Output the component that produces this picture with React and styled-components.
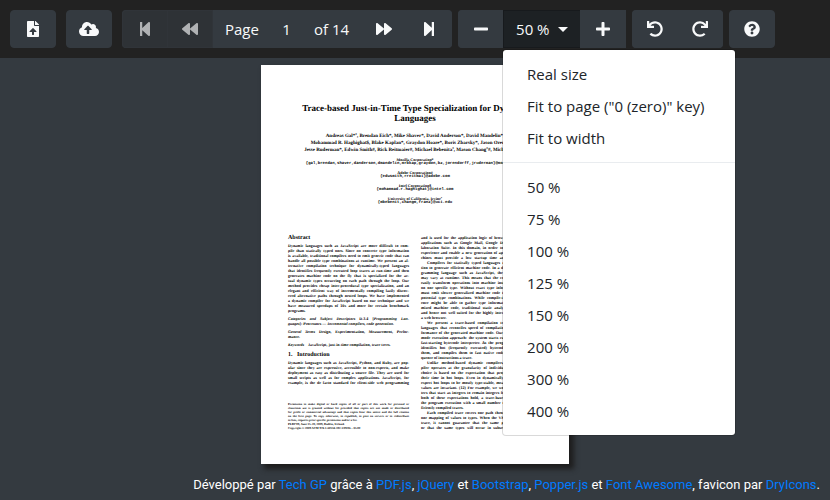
import React from "react";
import styled, { createGlobalStyle, css } from "styled-components";
import {
  FaFileUpload,
  FaCloudUploadAlt,
  FaStepBackward,
  FaBackward,
  FaForward,
  FaStepForward,
  FaMinus,
  FaPlus,
  FaUndo,
  FaRedo,
  FaQuestionCircle,
} from "react-icons/fa";

const GlobalStyle = createGlobalStyle`
  *, *::before, *::after { box-sizing: border-box; }
  body {
    margin: 0;
    background: #343a40;
    color: #fff;
    font-family: "Open Sans", "Noto Sans", sans-serif;
    font-size: 15px;
    line-height: 24px;
  }
`;

const Toolbar = styled.header`
  display: flex;
  align-items: center;
  gap: 6px;
  padding: 10px;
  background: #222;
`;

const FileActions = styled.div`
  display: flex;
  gap: 10px;
  margin-right: 4px;
`;

const ButtonGroup = styled.div`
  position: relative;
  display: flex;
  border-radius: 4px;
  background: #343a40;

  > * + * {
    margin-left: -1px;
  }
`;

const controlBox = css`
  height: 38px;
  padding: 6px 12px;
  border: 1px solid transparent;
  color: #f8f9fa;
  font: inherit;
`;

const ToolButton = styled.button`
  ${controlBox}
  display: inline-flex;
  align-items: center;
  justify-content: center;
  gap: 8px;
  min-width: 46px;
  border-radius: 4px;
  background: ${(p) => (p.$open ? "#1d2124" : "#343a40")};
  border-color: ${(p) => (p.$open ? "#171a1d" : "#343a40")};
  white-space: nowrap;

  &:disabled {
    background: #2e3236;
    border-color: #303439;
    color: #b0b2b4;
  }

  ${ButtonGroup} > &:not(:first-child) {
    border-top-left-radius: 0;
    border-bottom-left-radius: 0;
  }
  ${ButtonGroup} > &:not(:last-child) {
    border-top-right-radius: 0;
    border-bottom-right-radius: 0;
  }

  svg {
    width: 20px;
    height: 16px;
  }
`;

const GroupLabel = styled.label`
  ${controlBox}
`;

const GroupText = styled.span`
  ${controlBox}
`;

const PageInput = styled.input`
  ${controlBox}
  width: 31px;
  padding: 6px 0;
  background: transparent;
  text-align: center;
`;

const Caret = styled.span`
  border-top: 5px solid currentColor;
  border-left: 5px solid transparent;
  border-right: 5px solid transparent;
`;

const Menu = styled.div`
  position: absolute;
  top: 100%;
  left: 45px;
  z-index: 10;
  min-width: 234px;
  margin-top: 1px;
  padding: 8px 0;
  border: 1px solid rgba(0, 0, 0, 0.15);
  border-radius: 4px;
  background: #fff;
  background-clip: padding-box;
`;

const MenuItem = styled.button`
  display: block;
  width: 100%;
  padding: 4px 24px;
  border: 0;
  background: transparent;
  color: #212529;
  font: inherit;
  text-align: left;
  white-space: nowrap;
`;

const MenuDivider = styled.hr`
  height: 1px;
  margin: 8px 0;
  border: 0;
  background: #e9ecef;
`;

const Viewer = styled.main`
  display: flex;
  justify-content: center;
  padding: 7px 10px 9px;
`;

const Sheet = styled.article`
  flex: none;
  width: 308px;
  padding: 38px 27px 34px;
  background: #fff;
  color: #000;
  box-shadow: 4px 4px 5px 1px #1e1e1e;
  font-family: "Liberation Serif", serif;
  font-size: 4px;
  font-weight: 700;
  line-height: 5px;
  text-rendering: geometricPrecision;
`;

const PaperTitle = styled.h1`
  margin: 0 0 10px;
  font-size: 9px;
  line-height: 10px;
  text-align: center;
  white-space: nowrap;
`;

const Authors = styled.p`
  display: flex;
  flex-direction: column;
  align-items: center;
  margin: 0 0 3px;
  font-size: 5px;
  line-height: 7px;
  white-space: nowrap;
`;

const Affiliation = styled.p`
  display: flex;
  flex-direction: column;
  align-items: center;
  margin: 0 0 3px;
  font-size: 4px;
  line-height: 5px;
  white-space: nowrap;
`;

const Email = styled.span`
  font-family: "Liberation Mono", monospace;
`;

const Columns = styled.div`
  display: grid;
  grid-template-columns: 1fr 1fr;
  gap: 12px;
  margin-top: 29px;
`;

const Column = styled.section`
  min-width: 0;
`;

const Heading = styled.h2`
  margin: ${(p) => (p.$spaced ? "5px 0 2px" : "0 0 2px")};
  font-size: 6px;
  line-height: 6px;
  white-space: pre;
`;

const Paragraph = styled.p`
  margin: 0 0 ${(p) => (p.$gap ? "3px" : "0")};
`;

const Line = styled.span`
  display: block;
  padding-left: ${(p) => (p.$indent ? "6px" : "0")};
  text-align: left;
  text-align-last: ${(p) => (p.$end ? "left" : "justify")};
  white-space: nowrap;
`;

const Notice = styled.p`
  margin: 17px 0 0;
  font-size: 3px;
  line-height: 4px;
`;

const Credits = styled.footer`
  padding: 0 10px 2px;
  font-family: Roboto, "Open Sans", sans-serif;
  font-size: 13px;
  text-align: right;
`;

const CreditLink = styled.a`
  color: #007bff;
  text-decoration: none;
`;

const fits = ["Real size", 'Fit to page ("0 (zero)" key)', "Fit to width"];
const zooms = [50, 75, 100, 125, 150, 200, 300, 400];

const abstract = [
  "Dynamic languages such as JavaScript are more difficult to com-",
  "pile than statically typed ones. Since no concrete type information",
  "is available, traditional compilers need to emit generic code that can",
  "handle all possible type combinations at runtime. We present an al-",
  "ternative compilation technique for dynamically-typed languages",
  "that identifies frequently executed loop traces at run-time and then",
  "generates machine code on the fly that is specialized for the ac-",
  "tual dynamic types occurring on each path through the loop. Our",
  "method provides cheap inter-procedural type specialization, and an",
  "elegant and efficient way of incrementally compiling lazily discov-",
  "ered alternative paths through nested loops. We have implemented",
  "a dynamic compiler for JavaScript based on our technique and we",
  "have measured speedups of 10x and more for certain benchmark",
  "programs.",
];

const introduction = [
  "Dynamic languages such as JavaScript, Python, and Ruby, are pop-",
  "ular since they are expressive, accessible to non-experts, and make",
  "deployment as easy as distributing a source file. They are used for",
  "small scripts as well as for complex applications. JavaScript, for",
  "example, is the de facto standard for client-side web programming",
];

const notice = [
  "Permission to make digital or hard copies of all or part of this work for personal or",
  "classroom use is granted without fee provided that copies are not made or distributed",
  "for profit or commercial advantage and that copies bear this notice and the full citation",
  "on the first page. To copy otherwise, to republish, to post on servers or to redistribute",
  "to lists, requires prior specific permission and/or a fee.",
];

const rightColumn = [
  [
    "and is used for the application logic of browser-based productivity",
    "applications such as Google Mail, Google Docs and Zimbra Col-",
    "laboration Suite. In this domain, in order to provide a fluid user",
    "experience and enable a new generation of applications, virtual ma-",
    "chines must provide a low startup time and high performance.",
  ],
  [
    "Compilers for statically typed languages rely on type informa-",
    "tion to generate efficient machine code. In a dynamically typed pro-",
    "gramming language such as JavaScript, the types of expressions",
    "may vary at runtime. This means that the compiler can no longer",
    "easily transform operations into machine instructions that operate",
    "on one specific type. Without exact type information, the compiler",
    "must emit slower generalized machine code that can deal with all",
    "potential type combinations. While compile-time static type infer-",
    "ence might be able to gather type information to generate opti-",
    "mized machine code, traditional static analysis is very expensive",
    "and hence not well suited for the highly interactive environment of",
    "a web browser.",
  ],
  [
    "We present a trace-based compilation technique for dynamic",
    "languages that reconciles speed of compilation with excellent per-",
    "formance of the generated machine code. Our system uses a mixed-",
    "mode execution approach: the system starts running JavaScript in a",
    "fast-starting bytecode interpreter. As the program runs, the system",
    "identifies hot (frequently executed) bytecode sequences, records",
    "them, and compiles them to fast native code. We call such a se-",
    "quence of instructions a trace.",
  ],
  [
    "Unlike method-based dynamic compilers, our dynamic com-",
    "piler operates at the granularity of individual loops. This design",
    "choice is based on the expectation that programs spend most of",
    "their time in hot loops. Even in dynamically typed languages, we",
    "expect hot loops to be mostly type-stable, meaning that the types of",
    "values are invariant. (12) For example, we would expect loop coun-",
    "ters that start as integers to remain integers for all iterations. When",
    "both of these expectations hold, a trace-based compiler can cover",
    "the program execution with a small number of type-specialized, ef-",
    "ficiently compiled traces.",
  ],
  [
    "Each compiled trace covers one path through the program with",
    "one mapping of values to types. When the VM executes a compiled",
    "trace, it cannot guarantee that the same path will be followed",
    "or that the same types will occur in subsequent loop iterations.",
  ],
];

const shortEndings = [false, true, true, true, false];

function Lines({ lines, indent, shortEnd }) {
  return lines.map((text, i) => (
    <Line key={text} $indent={indent && i === 0} $end={shortEnd && i === lines.length - 1}>
      {text}
    </Line>
  ));
}

function Paper() {
  return (
    <Sheet>
      <PaperTitle>
        Trace-based Just-in-Time Type Specialization for Dynamic
        <br />
        Languages
      </PaperTitle>
      <Authors>
        <span>Andreas Gal*⁺, Brendan Eich*, Mike Shaver*, David Anderson*, David Mandelin*,</span>
        <span>Mohammad R. Haghighat$, Blake Kaplan*, Graydon Hoare*, Boris Zbarsky*, Jason Orendorff*,</span>
        <span>Jesse Ruderman*, Edwin Smith#, Rick Reitmaier#, Michael Bebenita⁺, Mason Chang⁺#, Michael Franz⁺</span>
      </Authors>
      <Affiliation>
        <span>Mozilla Corporation*</span>
        <Email>
          {"{gal,brendan,shaver,danderson,dmandelin,mrbkap,graydon,bz,jorendorff,jruderman}@mozilla.com"}
        </Email>
      </Affiliation>
      <Affiliation>
        <span>Adobe Corporation#</span>
        <Email>{"{edwsmith,rreitmai}@adobe.com"}</Email>
      </Affiliation>
      <Affiliation>
        <span>Intel Corporation$</span>
        <Email>{"{mohammad.r.haghighat}@intel.com"}</Email>
      </Affiliation>
      <Affiliation>
        <span>University of California, Irvine⁺</span>
        <Email>{"{mbebenit,changm,franz}@uci.edu"}</Email>
      </Affiliation>
      <Columns>
        <Column>
          <Heading>Abstract</Heading>
          <Paragraph $gap>
            <Lines lines={abstract} shortEnd />
          </Paragraph>
          <Paragraph $gap>
            <Line>
              <em>Categories and Subject Descriptors</em>&emsp;D.3.4 [<em>Programming Lan-</em>
            </Line>
            <Line $end>
              <em>guages</em>]: Processors — <em>Incremental compilers, code generation.</em>
            </Line>
          </Paragraph>
          <Paragraph $gap>
            <Line>
              <em>General Terms</em>&emsp;Design, Experimentation, Measurement, Perfor-
            </Line>
            <Line $end>mance.</Line>
          </Paragraph>
          <Paragraph>
            <Line $end>
              <em>Keywords</em>&emsp;JavaScript, just-in-time compilation, trace trees.
            </Line>
          </Paragraph>
          <Heading $spaced>{"1.   Introduction"}</Heading>
          <Paragraph>
            <Lines lines={introduction} />
          </Paragraph>
          <Notice>
            <Lines lines={notice} shortEnd />
            <Line $end>PLDI’09, June 15–20, 2009, Dublin, Ireland.</Line>
            <Line $end>Copyright © 2009 ACM 978-1-60558-392-1/09/06…$5.00</Line>
          </Notice>
        </Column>
        <Column>
          {rightColumn.map((lines, i) => (
            <Paragraph key={lines[0]}>
              <Lines lines={lines} indent={i > 0} shortEnd={shortEndings[i]} />
            </Paragraph>
          ))}
        </Column>
      </Columns>
    </Sheet>
  );
}

export default function App() {
  return (
    <>
      <GlobalStyle />
      <Toolbar>
        <FileActions>
          <ToolButton aria-label="Open file"><FaFileUpload /></ToolButton>
          <ToolButton aria-label="Open from cloud"><FaCloudUploadAlt /></ToolButton>
        </FileActions>
        <ButtonGroup>
          <ToolButton disabled aria-label="First page"><FaStepBackward /></ToolButton>
          <ToolButton disabled aria-label="Previous page"><FaBackward /></ToolButton>
          <GroupLabel htmlFor="page">Page</GroupLabel>
          <PageInput id="page" defaultValue="1" />
          <GroupText>of 14</GroupText>
          <ToolButton aria-label="Next page"><FaForward /></ToolButton>
          <ToolButton aria-label="Last page"><FaStepForward /></ToolButton>
        </ButtonGroup>
        <ButtonGroup>
          <ToolButton aria-label="Zoom out"><FaMinus /></ToolButton>
          <ToolButton $open aria-haspopup="menu" aria-expanded="true">
            50 % <Caret />
          </ToolButton>
          <ToolButton aria-label="Zoom in"><FaPlus /></ToolButton>
          <Menu role="menu">
            {fits.map((label) => (
              <MenuItem role="menuitem" key={label}>{label}</MenuItem>
            ))}
            <MenuDivider />
            {zooms.map((value) => (
              <MenuItem role="menuitem" key={value}>{`${value} %`}</MenuItem>
            ))}
          </Menu>
        </ButtonGroup>
        <ButtonGroup>
          <ToolButton aria-label="Rotate left"><FaUndo /></ToolButton>
          <ToolButton aria-label="Rotate right"><FaRedo /></ToolButton>
        </ButtonGroup>
        <ToolButton aria-label="Help"><FaQuestionCircle /></ToolButton>
      </Toolbar>
      <Viewer>
        <Paper />
      </Viewer>
      <Credits>
        Développé par <CreditLink href="#techgp">Tech GP</CreditLink> grâce à{" "}
        <CreditLink href="#pdfjs">PDF.js</CreditLink>, <CreditLink href="#jquery">jQuery</CreditLink> et{" "}
        <CreditLink href="#bootstrap">Bootstrap</CreditLink>, <CreditLink href="#popper">Popper.js</CreditLink> et{" "}
        <CreditLink href="#fontawesome">Font Awesome</CreditLink>, favicon par{" "}
        <CreditLink href="#dryicons">DryIcons</CreditLink>.
      </Credits>
    </>
  );
}
